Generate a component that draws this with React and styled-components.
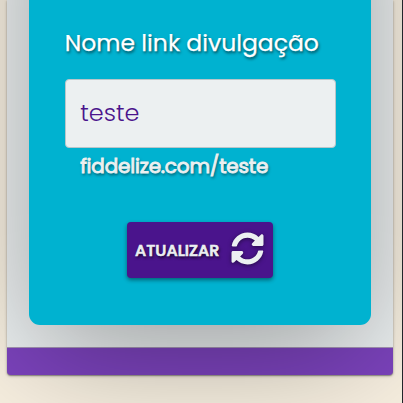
import React from "react";
import styled, { createGlobalStyle } from "styled-components";
import { FaSyncAlt } from "react-icons/fa";

const GlobalStyle = createGlobalStyle`
  * { box-sizing: border-box; }
  body {
    margin: 0;
    overflow: hidden;
    font-family: Poppins, Inter, "Open Sans", sans-serif;
    font-feature-settings: "cv11";
  }
`;

const Page = styled.main`
  width: 403px;
  height: 403px;
  overflow: hidden;
  padding: 0 9px 0 7px;
  background: #f7efe0;
  border-right: 1px solid #21252b;
`;

const Panel = styled.section`
  width: 386.4px;
  height: 374.5px;
  border-radius: 0 0 4px 4px;
  background: #7c43bd;
  box-shadow: 0 1px 3px rgba(0, 0, 0, 0.3), 0 1px 1px rgba(0, 0, 0, 0.25);
`;

const PanelBody = styled.div`
  display: flex;
  align-items: flex-end;
  width: 385.7px;
  height: 347.5px;
  padding: 0 22px 22.5px 22.4px;
  background: #ecf0f1;
  border-bottom: 1px solid #a595b5;
`;

const Card = styled.form`
  display: flex;
  flex-direction: column;
  flex: none;
  height: 725px;
  width: 341.4px;
  padding: 425px 35px 0 35.3px;
  border-radius: 11px;
  background: #00b2d0;
  box-shadow: 0 31px 120px -6px rgba(0, 0, 0, 0.35);
  margin-bottom: -1px;
`;

const Label = styled.label`
  height: 36px;
  line-height: 36px;
  font-size: 23.5px;
  font-weight: 400;
  -webkit-text-stroke: 0.25px #fff;
  white-space: nowrap;
  color: #fff;
  text-shadow: 1px 2px 3px rgba(0, 0, 0, 0.6);
`;

const Field = styled.input`
  width: 271px;
  height: 69px;
  margin-top: 18px;
  padding: 0 14.5px 2px;
  border: 1px solid #b9c6ca;
  border-radius: 4px;
  outline: none;
  background: #ecf0f1;
  color: #4a148c;
  font: 300 24px Poppins, Inter, sans-serif;
`;

const Hint = styled.p`
  height: 30px;
  margin: 3px 0 0 15.5px;
  line-height: 30px;
  font-size: 20px;
  font-weight: 400;
  letter-spacing: -0.18px;
  -webkit-text-stroke: 0.9px #ecf0f1;
  white-space: nowrap;
  color: #ecf0f1;
  text-shadow: 1px 2px 3px rgba(0, 0, 0, 0.6);
`;

const Button = styled.button`
  display: flex;
  align-items: center;
  width: 146px;
  height: 56px;
  margin: 41px 0 0 62.4px;
  padding: 0 8px;
  border: 0;
  border-radius: 4px;
  background: #4a148c;
  color: #ecf0f1;
  font: 500 16px Poppins, Inter, sans-serif;
  box-shadow: 0 2px 4px rgba(0, 0, 0, 0.45);
`;

const ButtonText = styled.span`
  width: 96px;
  text-align: left;
  letter-spacing: 0.05px;
  -webkit-text-stroke: 0.7px #ecf0f1;
  text-shadow: 1px 2px 3px rgba(0, 0, 0, 0.8);
`;

const SyncIcon = styled(FaSyncAlt)`
  flex: none;
  width: 33px;
  height: 33px;
  margin: -4px 0 0 -0.5px;
  filter: drop-shadow(0 1px 2px rgba(0, 0, 0, 0.5));
`;

export default function App() {
  return (
    <>
      <GlobalStyle />
      <Page>
        <Panel>
          <PanelBody>
            <Card onSubmit={(e) => e.preventDefault()}>
              <Label htmlFor="link-name">Nome link divulgação</Label>
              <Field id="link-name" defaultValue="teste" />
              <Hint>fiddelize.com/teste</Hint>
              <Button type="submit">
                <ButtonText>ATUALIZAR</ButtonText>
                <SyncIcon />
              </Button>
            </Card>
          </PanelBody>
        </Panel>
      </Page>
    </>
  );
}
